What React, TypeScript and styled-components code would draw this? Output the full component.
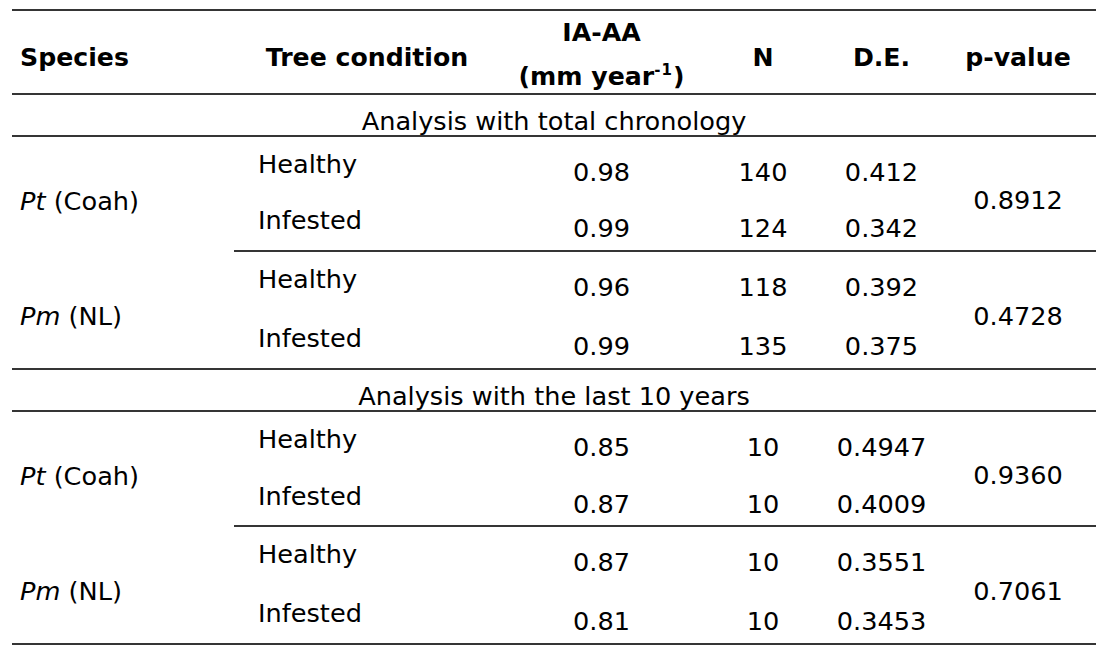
import React from 'react';
import styled, { createGlobalStyle } from 'styled-components';

const RULE = '2px solid #353535';

const GlobalStyle = createGlobalStyle`
  html, body {
    margin: 0;
    background: #ffffff;
  }
  body {
    font-family: "DejaVu Sans", Verdana, sans-serif;
    color: #000000;
  }
`;

const Page = styled.div`
  padding: 9px 20px 0 12px;
`;

const Table = styled.table`
  width: 1084px;
  table-layout: fixed;
  border-collapse: separate;
  border-spacing: 0;
  border-top: ${RULE};
  font-size: 25.6px;
`;

const HeadCell = styled.th<{ $align?: 'left' | 'center' }>`
  height: 82px;
  padding: 0 0 0 ${p => (p.$align === 'left' ? 8 : 0)}px;
  vertical-align: top;
  text-align: ${p => p.$align || 'center'};
  font-weight: bold;
  font-size: 25.2px;
  border-bottom: ${RULE};
`;

const HeadText = styled.div<{ $top: number }>`
  height: 82px;
  box-sizing: border-box;
  padding-top: ${p => p.$top}px;
  line-height: 44px;
  white-space: nowrap;
`;

const Sup = styled.sup`
  font-size: 15px;
  line-height: 0;
  vertical-align: 10px;
  letter-spacing: 1px;
`;

const SectionRow = styled.tr`
  height: 41px;
`;

const SectionCell = styled.td`
  padding: 12px 0 0;
  line-height: 28px;
  text-align: center;
  vertical-align: top;
  border-bottom: ${RULE};
`;

const DataRow = styled.tr<{ $h: number }>`
  height: ${p => p.$h}px;
`;

const SpeciesCell = styled.td<{ $rule: boolean }>`
  padding: 12px 0 0 8px;
  line-height: 28px;
  vertical-align: middle;
  white-space: nowrap;
  border-bottom: ${p => (p.$rule ? RULE : 'none')};
`;

const ConditionCell = styled.td<{ $rule: boolean }>`
  padding: 13px 0 0 24px;
  line-height: 28px;
  vertical-align: top;
  border-bottom: ${p => (p.$rule ? RULE : 'none')};
`;

const ValueCell = styled.td<{ $rule: boolean }>`
  padding: 21px 0 0;
  line-height: 28px;
  text-align: center;
  vertical-align: top;
  border-bottom: ${p => (p.$rule ? RULE : 'none')};
`;

const PCell = styled.td`
  padding: 12px 0 0;
  line-height: 28px;
  text-align: center;
  vertical-align: middle;
  border-bottom: ${RULE};
`;

type Row = { condition: string; ia: string; n: string; de: string };
type Block = { genus: string; place: string; p: string; heights: [number, number]; rows: Row[]; last: boolean };
type Section = { title: string; blocks: Block[] };

const sections: Section[] = [
  {
    title: 'Analysis with total chronology',
    blocks: [
      {
        genus: 'Pt', place: '(Coah)', p: '0.8912', heights: [56, 59], last: false,
        rows: [
          { condition: 'Healthy', ia: '0.98', n: '140', de: '0.412' },
          { condition: 'Infested', ia: '0.99', n: '124', de: '0.342' },
        ],
      },
      {
        genus: 'Pm', place: '(NL)', p: '0.4728', heights: [59, 59], last: true,
        rows: [
          { condition: 'Healthy', ia: '0.96', n: '118', de: '0.392' },
          { condition: 'Infested', ia: '0.99', n: '135', de: '0.375' },
        ],
      },
    ],
  },
  {
    title: 'Analysis with the last 10 years',
    blocks: [
      {
        genus: 'Pt', place: '(Coah)', p: '0.9360', heights: [57, 58], last: false,
        rows: [
          { condition: 'Healthy', ia: '0.85', n: '10', de: '0.4947' },
          { condition: 'Infested', ia: '0.87', n: '10', de: '0.4009' },
        ],
      },
      {
        genus: 'Pm', place: '(NL)', p: '0.7061', heights: [59, 59], last: true,
        rows: [
          { condition: 'Healthy', ia: '0.87', n: '10', de: '0.3551' },
          { condition: 'Infested', ia: '0.81', n: '10', de: '0.3453' },
        ],
      },
    ],
  },
];

const colWidths = [222, 266, 203, 120, 117, 156];

export default function App() {
  return (
    <>
      <GlobalStyle />
      <Page>
        <Table>
          <colgroup>
            {colWidths.map((w, i) => (
              <col key={i} style={{ width: w }} />
            ))}
          </colgroup>
          <thead>
            <tr>
              <HeadCell $align="left"><HeadText $top={25}>Species</HeadText></HeadCell>
              <HeadCell><HeadText $top={25}>Tree condition</HeadText></HeadCell>
              <HeadCell>
                <HeadText $top={0}>
                  IA-AA
                  <br />
                  (mm year<Sup>-1</Sup>)
                </HeadText>
              </HeadCell>
              <HeadCell><HeadText $top={25}>N</HeadText></HeadCell>
              <HeadCell><HeadText $top={25}>D.E.</HeadText></HeadCell>
              <HeadCell><HeadText $top={25}>p-value</HeadText></HeadCell>
            </tr>
          </thead>
          <tbody>
            {sections.map(section => (
              <React.Fragment key={section.title}>
                <SectionRow>
                  <SectionCell colSpan={6}>{section.title}</SectionCell>
                </SectionRow>
                {section.blocks.map(block =>
                  block.rows.map((row, i) => {
                    const rule = i === 1;
                    return (
                      <DataRow key={block.genus + row.condition} $h={block.heights[i]}>
                        {i === 0 && (
                          <SpeciesCell rowSpan={2} $rule={block.last}>
                            <i>{block.genus}</i> {block.place}
                          </SpeciesCell>
                        )}
                        <ConditionCell $rule={rule}>{row.condition}</ConditionCell>
                        <ValueCell $rule={rule}>{row.ia}</ValueCell>
                        <ValueCell $rule={rule}>{row.n}</ValueCell>
                        <ValueCell $rule={rule}>{row.de}</ValueCell>
                        {i === 0 && <PCell rowSpan={2}>{block.p}</PCell>}
                      </DataRow>
                    );
                  })
                )}
              </React.Fragment>
            ))}
          </tbody>
        </Table>
      </Page>
    </>
  );
}
